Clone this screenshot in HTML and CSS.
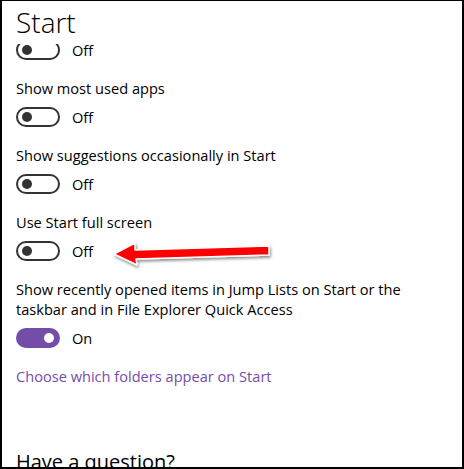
FILE: index.html
```html
<!DOCTYPE html>
<html lang="en">
<head>
  <meta charset="UTF-8" />
  <title>Start</title>
  <link rel="stylesheet" href="styles.css">
</head>
<body>
  <div class="frame">
    <h1 class="title">Start</h1>

    <div class="settings">
      <div class="clip">
        <div class="switch-row">
          <span class="switch"></span><span class="state">Off</span>
        </div>
      </div>

      <div class="setting">
        <p class="label">Show most used apps</p>
        <div class="switch-row">
          <span class="switch"></span><span class="state">Off</span>
        </div>
      </div>

      <div class="setting">
        <p class="label">Show suggestions occasionally in Start</p>
        <div class="switch-row">
          <span class="switch"></span><span class="state">Off</span>
        </div>
      </div>

      <div class="setting">
        <p class="label">Use Start full screen</p>
        <div class="switch-row">
          <span class="switch"></span><span class="state">Off</span>
        </div>
      </div>

      <div class="setting">
        <p class="label">Show recently opened items in Jump Lists on Start or the<br>taskbar and in File Explorer Quick Access</p>
        <div class="switch-row">
          <span class="switch on"></span><span class="state">On</span>
        </div>
      </div>

      <a class="link" href="#">Choose which folders appear on Start</a>

      <h2 class="question">Have a question?</h2>
    </div>

    <!-- red arrow pointing at the full screen switch -->
    <svg class="arrow" width="180" height="40" viewBox="0 0 180 40">
      <defs>
        <filter id="shadow" x="-10%" y="-30%" width="130%" height="180%">
          <feDropShadow dx="1" dy="2" stdDeviation="1.5" flood-color="#000" flood-opacity="0.45"/>
        </filter>
      </defs>
      <path d="M4 20 L25 9 L25 16 L159 12 L159 21 L26 25 L27 31 Z"
            fill="#f00" stroke="#fff" stroke-width="1.5" stroke-linejoin="round" filter="url(#shadow)"/>
    </svg>
  </div>
</body>
</html>
```

FILE: styles.css
```css
* {
  box-sizing: border-box;
}

body {
  margin: 0;
  padding: 0;
  background: #fff;
  font-family: 'Open Sans', 'Noto Sans', sans-serif;
  color: #000;
}

.frame {
  position: relative;
  width: 464px;
  height: 469px;
  border-style: solid;
  border-color: #000;
  border-width: 1px 2px 2px 2px;
  overflow: hidden;
  padding-left: 14px;
}

.title {
  margin: 0;
  height: 43px;
  padding-top: 2px;
  font-size: 28px;
  font-weight: 300;
  line-height: 38px;
}

.clip {
  height: 16px;
  overflow: hidden;
  display: flex;
  align-items: flex-end;
  margin-bottom: 18px;
}

.setting {
  margin-bottom: 18px;
}

.label {
  margin: 0 0 9px 0;
  font-size: 14.6px;
  line-height: 20px;
}

.switch-row {
  display: flex;
  align-items: center;
  height: 20px;
  flex-shrink: 0;
}

.switch {
  position: relative;
  width: 44px;
  height: 20px;
  border: 2px solid #333;
  border-radius: 10px;
}

.switch::after {
  content: "";
  position: absolute;
  left: 4px;
  top: 3px;
  width: 10px;
  height: 10px;
  border-radius: 50%;
  background: #333;
}

.switch.on {
  background: #744da9;
  border-color: #744da9;
}

.switch.on::after {
  left: auto;
  right: 4px;
  background: #fff;
}

.state {
  margin-left: 12px;
  font-size: 14.6px;
}

.link {
  display: block;
  color: #744da9;
  text-decoration: none;
  font-size: 14.6px;
  line-height: 20px;
}

.question {
  margin: 62px 0 0 0;
  font-size: 20px;
  font-weight: 400;
  line-height: 28px;
}

.arrow {
  position: absolute;
  left: 108px;
  top: 233px;
}
```
